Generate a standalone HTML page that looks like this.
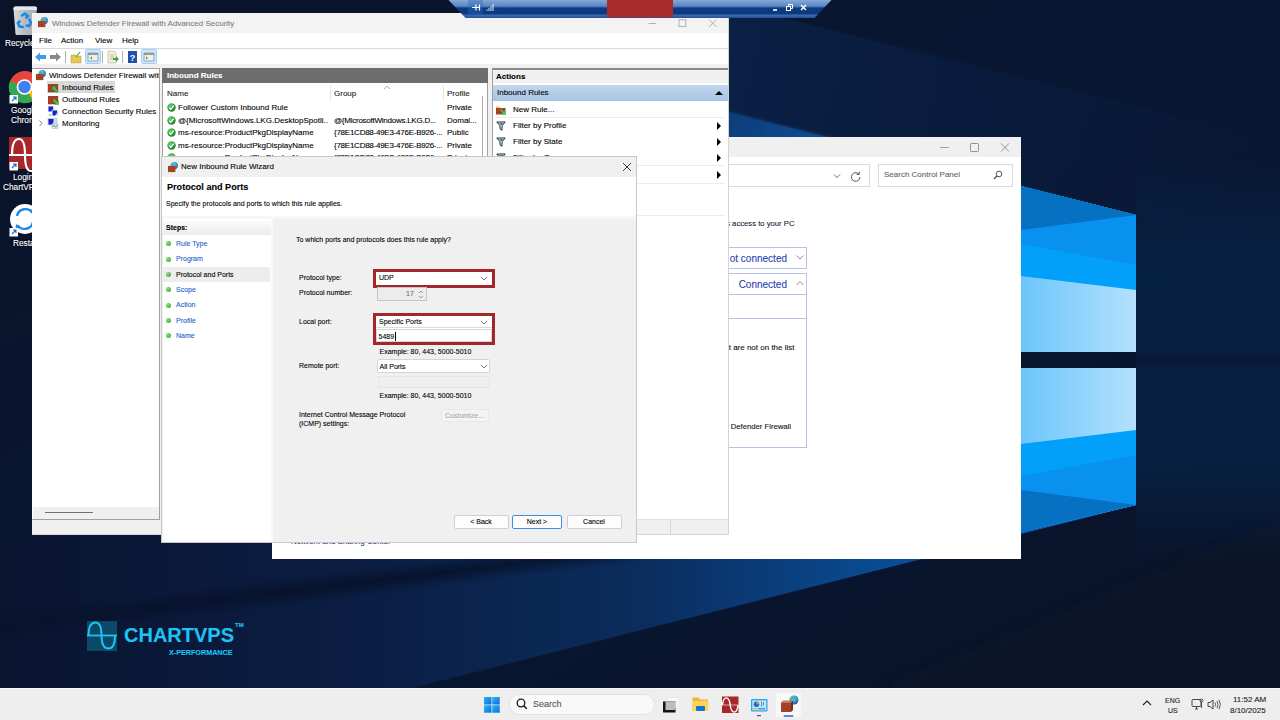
<!DOCTYPE html>
<html><head><meta charset="utf-8">
<style>
*{margin:0;padding:0;box-sizing:border-box}
html,body{width:1280px;height:720px;overflow:hidden;background:#0a1530;font-family:"Liberation Sans",sans-serif;font-size:8px;color:#000}
.a{position:absolute}
.t{position:absolute;white-space:nowrap;line-height:1;-webkit-text-stroke:0.1px currentColor}
</style></head><body>
<svg width="0" height="0" style="position:absolute">
<defs>
<pattern id="brk" width="4" height="3" patternUnits="userSpaceOnUse">
<rect width="4" height="3" fill="#b2472a"/><path d="M0 0.2h4M0 1.7h4M1 0.2v1.5M3 1.7v1.5" stroke="#7a2a18" stroke-width="0.45"/><rect x="1.4" y="0.5" width="1.2" height="0.8" fill="#d0704a" opacity="0.6"/>
</pattern>
<radialGradient id="glb" cx="0.4" cy="0.35" r="0.7"><stop offset="0" stop-color="#9ad8ff"/><stop offset="0.6" stop-color="#2a8ae0"/><stop offset="1" stop-color="#1a50b0"/></radialGradient>
<radialGradient id="chk" cx="0.35" cy="0.3" r="0.8"><stop offset="0" stop-color="#6ad070"/><stop offset="1" stop-color="#107a20"/></radialGradient>
<symbol id="fw" viewBox="0 0 11 11">
<circle cx="6.3" cy="3.6" r="3.6" fill="url(#glb)"/><path d="M3.2 2.2q1.5-1.4 3 -0.4q0.8 1 -0.5 1.6M8 2q1.6 0.6 1.6 2.4q-0.8 0.4 -1.2 -0.6" fill="#3cbf3c"/>
<rect x="0" y="3.9" width="7.4" height="6.2" fill="url(#brk)"/>
</symbol>
<symbol id="wallIn" viewBox="0 0 11 9">
<rect x="0" y="0" width="10.2" height="8.3" fill="url(#brk)"/>
<path d="M4.3 2.6l0 3.8 1.1-1.1 3.2 3.2 1.6-1.6-3.2-3.2 1.1-1.1z" fill="#3ccf4c" stroke="#1a8a2a" stroke-width="0.35"/>
</symbol>
<symbol id="wallOut" viewBox="0 0 11 9">
<rect x="0" y="0" width="10.2" height="8.3" fill="url(#brk)"/>
<path d="M10.5 8.6l0-3.8-1.1 1.1-3.2-3.2-1.6 1.6 3.2 3.2-1.1 1.1z" fill="#3ccf4c" stroke="#1a8a2a" stroke-width="0.35"/>
</symbol>
</defs></svg>
<!-- desktop background -->
<svg class="a" style="left:0;top:0" width="1280" height="720" viewBox="0 0 1280 720">
<defs>
<linearGradient id="bg" x1="0" y1="0" x2="1" y2="1">
<stop offset="0" stop-color="#0b1329"/><stop offset="0.5" stop-color="#081733"/><stop offset="1" stop-color="#0a1328"/>
</linearGradient>
<linearGradient id="lite" x1="0" y1="0" x2="1" y2="0">
<stop offset="0" stop-color="#6cc6fb"/><stop offset="1" stop-color="#b3e1fd"/>
</linearGradient>
</defs>
<rect width="1280" height="720" fill="url(#bg)"/>
<linearGradient id="beamL" gradientUnits="userSpaceOnUse" x1="1136" y1="0" x2="0" y2="0">
<stop offset="0" stop-color="#0a66c0"/><stop offset="0.2" stop-color="#0a4e98"/><stop offset="0.44" stop-color="#0b2c5c"/><stop offset="0.7" stop-color="#0b1d42"/><stop offset="1" stop-color="#0a1530"/>
</linearGradient>
<linearGradient id="beamU" gradientUnits="userSpaceOnUse" x1="1021" y1="186" x2="600" y2="80">
<stop offset="0" stop-color="#0a70d0"/><stop offset="0.5" stop-color="#0a4a90"/><stop offset="1" stop-color="#0b2a58"/>
</linearGradient>
<filter id="bl"><feGaussianBlur stdDeviation="6"/></filter>
<filter id="bl2"><feGaussianBlur stdDeviation="1.2"/></filter>
<polygon points="1136,505 0,792 0,540 1021,400" fill="url(#beamL)"/>
<polygon points="1021,186 560,68 560,300 1021,300" fill="url(#beamU)" filter="url(#bl2)"/>
<linearGradient id="stk" gradientUnits="userSpaceOnUse" x1="0" y1="0" x2="660" y2="0"><stop offset="0" stop-color="#070e22" stop-opacity="0.3"/><stop offset="0.5" stop-color="#070e22" stop-opacity="0.6"/><stop offset="1" stop-color="#070e22" stop-opacity="0.7"/></linearGradient><filter id="bl3" x="-10%" y="-50%" width="120%" height="200%"><feGaussianBlur stdDeviation="4"/></filter><linearGradient id="stkN" gradientUnits="userSpaceOnUse" x1="318.3" y1="573.6" x2="321.7" y2="601.4"><stop offset="0" stop-color="#060c1e" stop-opacity="0"/><stop offset="0.5" stop-color="#060c1e" stop-opacity="0.75"/><stop offset="1" stop-color="#060c1e" stop-opacity="0"/></linearGradient>
<linearGradient id="stkH" gradientUnits="userSpaceOnUse" x1="0" y1="0" x2="640" y2="0"><stop offset="0" stop-color="#fff" stop-opacity="0.35"/><stop offset="0.6" stop-color="#fff" stop-opacity="0.9"/><stop offset="0.95" stop-color="#fff" stop-opacity="0.8"/><stop offset="1" stop-color="#fff" stop-opacity="0"/></linearGradient>
<mask id="stkM"><rect x="0" y="400" width="700" height="320" fill="url(#stkH)"/></mask>
<polygon points="-10,612 650,535 650,562 -10,640" fill="url(#stkN)" mask="url(#stkM)"/>

<polygon points="1280,520 880,688 1280,688" fill="#0a1226" opacity="0.6" filter="url(#bl)"/>
<linearGradient id="bandU" gradientUnits="userSpaceOnUse" x1="729" y1="60" x2="1280" y2="200"><stop offset="0" stop-color="#0c2a5a" stop-opacity="0.5"/><stop offset="0.5" stop-color="#0b2450" stop-opacity="0.3"/><stop offset="1" stop-color="#0b2048" stop-opacity="0.05"/></linearGradient><polygon points="729,4.5 1280,142 1280,252 729,112" fill="url(#bandU)"/>
<linearGradient id="glowV" x1="0" y1="0" x2="0" y2="1"><stop offset="0" stop-color="#06284e" stop-opacity="0"/><stop offset="0.25" stop-color="#06284e" stop-opacity="0.6"/><stop offset="0.75" stop-color="#06284e" stop-opacity="0.6"/><stop offset="1" stop-color="#06284e" stop-opacity="0"/></linearGradient>
<rect x="1136" y="160" width="144" height="400" fill="url(#glowV)"/>
<rect x="1136" y="353" width="144" height="14" fill="#0a1936" opacity="0.8"/>
<!-- windows logo upper pane -->
<polygon points="1021,186 1136,215 1136,352 1021,352" fill="url(#lite)"/>
<polygon points="1021,186 1136,215 1136,290 1021,276" fill="#03a0fa"/>
<polygon points="1021,186 1136,215 1136,265 1021,244" fill="#0891ee"/>
<polygon points="1021,186 1136,215 1021,230" fill="#0670c2"/>
<!-- lower pane -->
<polygon points="1021,368 1136,368 1136,505 1021,532" fill="url(#lite)"/>
<polygon points="1021,444 1136,430 1136,505 1021,532" fill="#03a0fa"/>
<polygon points="1021,476 1136,455 1136,505 1021,532" fill="#0891ee"/>
<polygon points="1021,490 1136,505 1021,532" fill="#0670c2"/>
</svg>

<!-- desktop icons -->
<svg class="a" style="left:0;top:0" width="40" height="260" viewBox="0 0 40 260">
 <linearGradient id="binG" x1="0" y1="0" x2="1" y2="0"><stop offset="0" stop-color="#d8dce0"/><stop offset="0.5" stop-color="#b4bac0"/><stop offset="1" stop-color="#a8aeb4"/></linearGradient>
 <path d="M13.5 8.5q0-2 2-2h19.5q2 0 2 2l-3 25.5q-0.3 1-1.5 1h-15.5q-1.2 0-1.5-1z" fill="url(#binG)"/><path d="M13.5 8.5q0-2 2-2h19.5q2 0 2 2v1.5h-23.5z" fill="#e4e8ec"/>
 <path d="M22 15.5l3-2 3 2.5-1.6 1.5M29.5 19.5l1.5 3.5-2 3-2.3-0.5M23 27l-3.5-0.5-1.5-3.5 1.5-1.5" stroke="#1a8ae8" stroke-width="2.6" fill="none" stroke-linecap="round"/>
 <circle cx="25" cy="87" r="16" fill="#e8453c"/>
 <path d="M25 87 L39 79 A16 16 0 0 1 33 101z" fill="#fbbc05"/>
 <path d="M25 87 L33 101 A16 16 0 0 1 10 81z" fill="#34a853"/>
 <circle cx="24.5" cy="87" r="7.8" fill="#fff"/><circle cx="24.5" cy="87" r="6.2" fill="#3f7ff0"/>
 <rect x="9" y="137" width="30" height="32" fill="#a8282a"/>
 <path d="M9 155h30" stroke="#fff" stroke-width="2"/>
 <path d="M12 155c0-14 4-16 7-16s6 3 6 16 3 16 6 16 6-3 6-16" stroke="#fff" stroke-width="2.2" fill="none"/>
 <circle cx="25" cy="219" r="15" fill="#fff"/>
 <path d="M17 216a8.5 8.5 0 0 1 15.5-3" stroke="#1e88e5" stroke-width="2.3" fill="none"/><path d="M33 222a8.5 8.5 0 0 1-15.5 3" stroke="#1e88e5" stroke-width="2.3" fill="none"/>
 <path d="M29 210l5 4 0.5-5z" fill="#1e88e5"/><path d="M21 228l-5-4-0.5 5z" fill="#1e88e5"/>
 <rect x="9.5" y="95" width="8.5" height="8.5" fill="#fff"/><path d="M12 101l4-4M13 97h3v3" stroke="#1a6ad0" stroke-width="1.1" fill="none"/>
 <rect x="9.5" y="162" width="8.5" height="8.5" fill="#fff"/><path d="M12 168l4-4M13 164h3v3" stroke="#1a6ad0" stroke-width="1.1" fill="none"/>
 <rect x="9.5" y="228" width="8.5" height="8.5" fill="#fff"/><path d="M12 234l4-4M13 230h3v3" stroke="#1a6ad0" stroke-width="1.1" fill="none"/>
</svg>
<div class="t" style="left:5px;top:39px;font-size:8.3px;color:#fff;text-shadow:0 0 2px #000">Recycle Bin</div>
<div class="t" style="left:11px;top:106px;font-size:8.3px;color:#fff;text-shadow:0 0 2px #000">Google</div>
<div class="t" style="left:11px;top:116px;font-size:8.3px;color:#fff;text-shadow:0 0 2px #000">Chrome</div>
<div class="t" style="left:13px;top:173px;font-size:8.3px;color:#fff;text-shadow:0 0 2px #000">Login</div>
<div class="t" style="left:3px;top:183px;font-size:8.3px;color:#fff;text-shadow:0 0 2px #000">ChartVPS</div>
<div class="t" style="left:13px;top:239px;font-size:8.3px;color:#fff;text-shadow:0 0 2px #000">Restart</div>
<!-- chartvps logo -->
<svg class="a" style="left:87px;top:621px" width="30" height="30" viewBox="0 0 30 30">
 <rect width="30" height="30" fill="#0c4966"/>
 <path d="M0 14.5h30" stroke="#1ec3f5" stroke-width="1.8"/>
 <path d="M1.5 14.5c0-10 3.5-13 7-13s6 3 6 13 3 13 7 13 6.5-3 6.5-13" stroke="#1ec3f5" stroke-width="2" fill="none"/>
</svg>
<div class="t" style="left:124px;top:625px;font-size:20px;font-weight:bold;color:#1ec3f5">CHARTVPS</div>
<div class="t" style="left:235px;top:622px;font-size:6px;font-weight:bold;color:#1ec3f5">TM</div>
<div class="t" style="left:169px;top:649px;font-size:7.2px;font-weight:bold;color:#1ec3f5">X-PERFORMANCE</div>

<!-- Control panel window -->
<div class="a" id="cp" style="left:272px;top:137px;width:749px;height:422px;background:#fff;overflow:hidden">
 <div class="a" style="left:0;top:0;width:749px;height:20px;background:#f0f0f0"></div>
 <svg class="a" style="left:665px;top:5px" width="80" height="11"><path d="M3 5.5h9" stroke="#999" stroke-width="0.9"/><rect x="33.5" y="1.5" width="8" height="8" rx="0.8" fill="none" stroke="#888" stroke-width="0.9"/><path d="M64 1.5l8 8M72 1.5l-8 8" stroke="#888" stroke-width="0.9"/></svg>
 <div class="a" style="left:-2px;top:27px;width:600px;height:23px;border:1px solid #dadada;background:#fff"></div>
 <svg class="a" style="left:561px;top:34px" width="30" height="12"><path d="M1 3.5l3 3 3-3" stroke="#555" fill="none" stroke-width="0.9"/><path d="M27 6a4.3 4.3 0 1 1-1.3-3.1" stroke="#555" fill="none" stroke-width="1"/><path d="M26.2 0.8v2.6h-2.6" stroke="#555" fill="none" stroke-width="1"/></svg>
 <div class="a" style="left:606px;top:27px;width:135px;height:23px;border:1px solid #dadada;background:#fff"></div>
 <div class="t" style="left:612px;top:34px;font-size:8px;color:#666">Search Control Panel</div>
 <svg class="a" style="left:721px;top:33px" width="10" height="10"><circle cx="6" cy="4" r="2.8" stroke="#444" fill="none" stroke-width="0.9"/><path d="M4 6l-3 3" stroke="#444" stroke-width="1.1"/></svg>
 <div class="t" style="right:226.5px;top:83px;font-size:7.7px;color:#1a1a3a">Allowing apps and features access to your PC</div>
 <div class="a" style="left:-2px;top:110px;width:537px;height:22px;border:1px solid #bac0ea;background:#fff"></div>
 <div class="t" style="right:234px;top:116.5px;font-size:10px;color:#2a3fb0">ot connected</div>
 <svg class="a" style="left:524px;top:118px" width="8" height="5"><path d="M0.5 0.5l3.5 3.5 3.5-3.5" stroke="#777" fill="none" stroke-width="0.8"/></svg>
 <div class="a" style="left:-2px;top:136px;width:537px;height:22px;border:1px solid #bac0ea;background:#fff"></div>
 <div class="t" style="right:234px;top:142.5px;font-size:10px;color:#2a3fb0">Connected</div>
 <svg class="a" style="left:524px;top:144px" width="8" height="5"><path d="M0.5 4l3.5-3.5 3.5 3.5" stroke="#777" fill="none" stroke-width="0.8"/></svg>
 <div class="a" style="left:-2px;top:157px;width:537px;height:25px;border:1px solid #bac0ea;border-top:none"></div>
 <div class="a" style="left:-2px;top:181px;width:537px;height:130px;border:1px solid #bac0ea;border-top:none"></div>
 <div class="t" style="right:226.5px;top:206.5px;font-size:8px;color:#111">Block all incoming connections, including those that are not on the list</div>
 <div class="t" style="right:230px;top:286px;font-size:7.7px;color:#111">Notification state: Notify me when Windows Defender Firewall</div>
 <div class="t" style="left:19px;top:401px;font-size:7.9px;color:#2a3a7a">Network and Sharing Center</div>
</div>

<!-- MMC window -->
<div class="a" id="mmc" style="left:32px;top:13px;width:697px;height:522px;background:#f0f0f0;overflow:hidden">
 <!-- title bar -->
 <div class="a" style="left:0;top:0;width:697px;height:20px;background:#f3f3f3"></div>
 <svg class="a" style="left:6px;top:4px" width="11" height="11"><use href="#fw"/></svg>
 <div class="t" style="left:20px;top:6.5px;font-size:8px;color:#808080">Windows Defender Firewall with Advanced Security</div>
 <svg class="a" style="left:611px;top:5px" width="80" height="12"><path d="M5.5 5.5h7.5" stroke="#a0a0a0" stroke-width="0.8"/><rect x="36" y="1.8" width="6.8" height="6.8" fill="none" stroke="#a0a0a0" stroke-width="0.8"/><path d="M66 1.5l7.5 7.5M73.5 1.5l-7.5 7.5" stroke="#a0a0a0" stroke-width="0.8"/></svg>
 <!-- menu -->
 <div class="a" style="left:0;top:20px;width:697px;height:15px;background:#fff"></div>
 <div class="t" style="left:7px;top:24px;font-size:8px;color:#000">File</div>
 <div class="t" style="left:29px;top:24px;font-size:8px;color:#000">Action</div>
 <div class="t" style="left:63px;top:24px;font-size:8px;color:#000">View</div>
 <div class="t" style="left:90px;top:24px;font-size:8px;color:#000">Help</div>
 <div class="a" style="left:0;top:35px;width:697px;height:1px;background:#d9d9d9"></div>
 <!-- toolbar -->
 <div class="a" style="left:0;top:36px;width:697px;height:14.5px;background:#fff"></div>
 <svg class="a" style="left:0;top:35px" width="130" height="18" viewBox="0 0 130 18">
  <path d="M3 9l5-4.5v2.5h6v4h-6v2.5z" fill="#3d9be9"/>
  <path d="M29 9l-5-4.5v2.5h-6v4h6v2.5z" fill="#8a8a8a"/>
  <rect x="33" y="3" width="1" height="12" fill="#b0b0b0"/>
  <path d="M39 7h4l1 1h5v7h-10z" fill="#e8c65a" stroke="#b8962a" stroke-width="0.5"/><path d="M44 9l4-5" stroke="#3aaa3a" stroke-width="1.2"/>
  <rect x="53.5" y="1.5" width="15" height="14" rx="1" fill="#cce8ff" stroke="#99d1ff"/>
  <rect x="56" y="5" width="10" height="8" fill="#eee" stroke="#777" stroke-width="0.6"/><rect x="56" y="5" width="10" height="2" fill="#999"/><path d="M58 10l2-1.5v3z" fill="#2a2"/>
  <rect x="70" y="3" width="1" height="12" fill="#b0b0b0"/>
  <path d="M76 3h6l2 2v10h-8z" fill="#f4f0d8" stroke="#999" stroke-width="0.5"/><path d="M78 7h4M78 9h4M78 11h3" stroke="#888" stroke-width="0.5"/><path d="M81 10h3v-2l3 3-3 3v-2h-3z" fill="#3aaa3a"/>
  <rect x="90" y="3" width="1" height="12" fill="#b0b0b0"/>
  <rect x="96" y="3" width="9" height="12" fill="#1f4fb0"/><text x="100.5" y="13" font-size="9" font-family="Liberation Sans" font-weight="bold" fill="#fff" text-anchor="middle">?</text>
  <rect x="109.5" y="1.5" width="15" height="14" rx="1" fill="#cce8ff" stroke="#99d1ff"/>
  <rect x="112" y="5" width="10" height="8" fill="#eee" stroke="#777" stroke-width="0.6"/><rect x="112" y="5" width="10" height="2" fill="#999"/><path d="M114 8.5l2 1.5-2 1.5z" fill="#2a2"/>
 </svg>
 <!-- left pane -->
 <div class="a" style="left:0;top:55px;width:128px;height:452px;background:#fff;border:1px solid #a0a0a0;border-left:none"></div>
 <div class="a" style="left:1px;top:494px;width:126px;height:12px;background:#f0f0f0"></div>
 <div class="a" style="left:13px;top:499px;width:48px;height:1px;background:#707070"></div>
 <svg class="a" style="left:3.5px;top:56.5px" width="11" height="11"><use href="#fw"/></svg>
 <div class="t" style="left:17px;top:58.5px;font-size:8px;color:#000;width:110px;overflow:hidden">Windows Defender Firewall with Advanced Security</div>
 <div class="a" style="left:15px;top:68px;width:68px;height:12px;background:#d9d9d9"></div>
 <svg class="a" style="left:16px;top:70.5px" width="11" height="9"><use href="#wallIn"/></svg>
 <div class="t" style="left:30px;top:70.5px;font-size:8px;color:#000">Inbound Rules</div>
 <svg class="a" style="left:16px;top:82.5px" width="11" height="9"><use href="#wallOut"/></svg>
 <div class="t" style="left:30px;top:83px;font-size:8px;color:#000">Outbound Rules</div>
 <svg class="a" style="left:16px;top:92.5px" width="12" height="11" viewBox="0 0 12 11"><rect x="0.5" y="0.5" width="6" height="5" fill="#c8d8f4"/><path d="M0.5 0.5h4.5v2.5l-2 2.5h-2.5z" fill="#1424c8"/><rect x="4.5" y="4.5" width="6" height="5" fill="#c8d8f4"/><path d="M4.5 4.5h4.5v2.5l-2 2.5h-2.5z" fill="#1424c8"/><path d="M0.5 9.5q1.5-2 3 0z" fill="#18b818"/></svg>
 <div class="t" style="left:30px;top:95px;font-size:8px;color:#000">Connection Security Rules</div>
 <svg class="a" style="left:7px;top:104.5px" width="22" height="11" viewBox="0 0 22 11"><path d="M0.5 2.5l2.5 2.8-2.5 2.8" stroke="#666" fill="none" stroke-width="0.8"/><rect x="9" y="0.5" width="9" height="6.5" fill="#d0dcf0" stroke="#999" stroke-width="0.4"/><path d="M9.5 1h5v3l-1.5 2.5h-3.5z" fill="#1424c8"/><rect x="13" y="6" width="6" height="4.5" fill="#dde6f6" stroke="#8aa0d0" stroke-width="0.4"/><path d="M13.5 8.5l1.5-1 1.5 1.5 2-1.5" stroke="#20a020" fill="none" stroke-width="0.9"/></svg>
 <div class="t" style="left:30px;top:107px;font-size:8px;color:#000">Monitoring</div>
 <!-- middle pane -->
 <div class="a" style="left:130px;top:55px;width:326px;height:452px;background:#fff;border:1px solid #a0a0a0"></div>
 <div class="a" style="left:130px;top:55px;width:326px;height:15px;background:#6d6d6d"></div>
 <div class="t" style="left:135px;top:59px;font-size:8px;color:#fff;font-weight:bold">Inbound Rules</div>
 <div class="a" style="left:298px;top:72px;width:1px;height:16px;background:#e5e5e5"></div>
 <div class="a" style="left:411px;top:72px;width:1px;height:16px;background:#e5e5e5"></div>
 <div class="t" style="left:135px;top:77px;font-size:8px;color:#222">Name</div>
 <div class="t" style="left:302px;top:77px;font-size:8px;color:#222">Group</div>
 <div class="t" style="left:415px;top:77px;font-size:8px;color:#222">Profile</div>
 <svg class="a" style="left:351px;top:72px" width="8" height="5"><path d="M1 4l3-3 3 3" stroke="#999" fill="none" stroke-width="0.8"/></svg>
 <div class="a" style="left:450px;top:83px;width:1px;height:420px;background:#aaa"></div>
<svg class="a" style="left:135px;top:89.9px" width="9" height="9" viewBox="0 0 9 9"><circle cx="4.5" cy="4.5" r="4.2" fill="url(#chk)"/><path d="M2.3 4.6l1.5 1.7 2.9-3.6" stroke="#fff" stroke-width="1.3" fill="none"/></svg><div class="t" style="left:146px;top:90.9px;font-size:8px;color:#000;width:150px;overflow:hidden">Follower Custom Inbound Rule</div><div class="t" style="left:302px;top:90.9px;font-size:8px;color:#000;letter-spacing:-0.25px"></div><div class="t" style="left:415px;top:90.9px;font-size:8px;color:#000">Private</div><svg class="a" style="left:135px;top:102.5px" width="9" height="9" viewBox="0 0 9 9"><circle cx="4.5" cy="4.5" r="4.2" fill="url(#chk)"/><path d="M2.3 4.6l1.5 1.7 2.9-3.6" stroke="#fff" stroke-width="1.3" fill="none"/></svg><div class="t" style="left:146px;top:103.5px;font-size:8px;color:#000;width:150px;overflow:hidden">@{MicrosoftWindows.LKG.DesktopSpotli...</div><div class="t" style="left:302px;top:103.5px;font-size:8px;color:#000;letter-spacing:-0.25px">@{MicrosoftWindows.LKG.D...</div><div class="t" style="left:415px;top:103.5px;font-size:8px;color:#000">Domai...</div><svg class="a" style="left:135px;top:115.1px" width="9" height="9" viewBox="0 0 9 9"><circle cx="4.5" cy="4.5" r="4.2" fill="url(#chk)"/><path d="M2.3 4.6l1.5 1.7 2.9-3.6" stroke="#fff" stroke-width="1.3" fill="none"/></svg><div class="t" style="left:146px;top:116.1px;font-size:8px;color:#000;width:150px;overflow:hidden">ms-resource:ProductPkgDisplayName</div><div class="t" style="left:302px;top:116.1px;font-size:8px;color:#000;letter-spacing:-0.25px">{78E1CD88-49E3-476E-B926-...</div><div class="t" style="left:415px;top:116.1px;font-size:8px;color:#000">Public</div><svg class="a" style="left:135px;top:127.7px" width="9" height="9" viewBox="0 0 9 9"><circle cx="4.5" cy="4.5" r="4.2" fill="url(#chk)"/><path d="M2.3 4.6l1.5 1.7 2.9-3.6" stroke="#fff" stroke-width="1.3" fill="none"/></svg><div class="t" style="left:146px;top:128.7px;font-size:8px;color:#000;width:150px;overflow:hidden">ms-resource:ProductPkgDisplayName</div><div class="t" style="left:302px;top:128.7px;font-size:8px;color:#000;letter-spacing:-0.25px">{78E1CD88-49E3-476E-B926-...</div><div class="t" style="left:415px;top:128.7px;font-size:8px;color:#000">Private</div><svg class="a" style="left:135px;top:140.3px" width="9" height="9" viewBox="0 0 9 9"><circle cx="4.5" cy="4.5" r="4.2" fill="url(#chk)"/><path d="M2.3 4.6l1.5 1.7 2.9-3.6" stroke="#fff" stroke-width="1.3" fill="none"/></svg><div class="t" style="left:146px;top:141.3px;font-size:8px;color:#000;width:150px;overflow:hidden">ms-resource:ProductPkgDisplayName</div><div class="t" style="left:302px;top:141.3px;font-size:8px;color:#000;letter-spacing:-0.25px">{78E1CD88-49E3-476E-B926-...</div><div class="t" style="left:415px;top:141.3px;font-size:8px;color:#000">Private</div>
 <!-- actions pane -->
 <div class="a" style="left:460px;top:55px;width:237px;height:452px;background:#fff;border:1px solid #a0a0a0;border-top:2px solid #8a8a8a;border-right:none;border-bottom:1px solid #e2e2e2"></div>
 <div class="a" style="left:461px;top:57px;width:236px;height:13px;background:#f0f0f0"></div>
 <div class="t" style="left:464px;top:60px;font-size:8px;font-weight:bold;color:#000">Actions</div><div class="a" style="left:463px;top:103.5px;width:230px;height:1px;background:#ececec"></div><div class="a" style="left:463px;top:152px;width:230px;height:1px;background:#ececec"></div><div class="a" style="left:463px;top:169.5px;width:230px;height:1px;background:#ececec"></div><div class="a" style="left:463px;top:201.5px;width:230px;height:1px;background:#ececec"></div>
 <div class="a" style="left:461px;top:71.5px;width:236px;height:16px;background:linear-gradient(#c2d6ee,#a7c2e2)"></div>
 <div class="t" style="left:465px;top:76px;font-size:8px;color:#000">Inbound Rules</div>
 <svg class="a" style="left:683px;top:77px" width="8" height="6"><path d="M0 5l4-4 4 4z" fill="#000"/></svg>
<svg class="a" style="left:464px;top:91.5px" width="11" height="10" viewBox="0 0 11 10"><rect x="0" y="1.5" width="3.5" height="2.5" fill="#f0c040"/><rect x="0" y="3" width="9.5" height="6.5" fill="url(#brk)"/><path d="M4.5 4.5l4.5 4.5M9 5.5v3.5h-3.5" stroke="#3ccf4c" stroke-width="1.6" fill="none"/></svg><div class="t" style="left:481px;top:92.5px;font-size:8px;color:#000">New Rule...</div><svg class="a" style="left:464px;top:107.8px" width="10" height="10" viewBox="0 0 10 10"><path d="M0.8 1h8.4l-3.2 3.8v4.4l-2-1.4v-3z" fill="none" stroke="#1a2030" stroke-width="1"/><path d="M2.5 2h5l-2.2 2.5z" fill="#2a8a8a"/></svg><div class="t" style="left:481px;top:108.8px;font-size:8px;color:#000">Filter by Profile</div><svg class="a" style="left:685px;top:108.8px" width="5" height="8"><path d="M0 0l4 4-4 4z" fill="#000"/></svg><svg class="a" style="left:464px;top:124.1px" width="10" height="10" viewBox="0 0 10 10"><path d="M0.8 1h8.4l-3.2 3.8v4.4l-2-1.4v-3z" fill="none" stroke="#1a2030" stroke-width="1"/><path d="M2.5 2h5l-2.2 2.5z" fill="#2a8a8a"/></svg><div class="t" style="left:481px;top:125.1px;font-size:8px;color:#000">Filter by State</div><svg class="a" style="left:685px;top:125.1px" width="5" height="8"><path d="M0 0l4 4-4 4z" fill="#000"/></svg><svg class="a" style="left:464px;top:140.4px" width="10" height="10" viewBox="0 0 10 10"><path d="M0.8 1h8.4l-3.2 3.8v4.4l-2-1.4v-3z" fill="none" stroke="#1a2030" stroke-width="1"/><path d="M2.5 2h5l-2.2 2.5z" fill="#2a8a8a"/></svg><div class="t" style="left:481px;top:141.4px;font-size:8px;color:#000">Filter by Group</div><svg class="a" style="left:685px;top:141.4px" width="5" height="8"><path d="M0 0l4 4-4 4z" fill="#000"/></svg><svg class="a" style="left:464px;top:156.7px" width="10" height="10" viewBox="0 0 10 10"><path d="M0.8 1h8.4l-3.2 3.8v4.4l-2-1.4v-3z" fill="none" stroke="#1a2030" stroke-width="1"/><path d="M2.5 2h5l-2.2 2.5z" fill="#2a8a8a"/></svg><div class="t" style="left:481px;top:157.7px;font-size:8px;color:#000">View</div><svg class="a" style="left:685px;top:157.7px" width="5" height="8"><path d="M0 0l4 4-4 4z" fill="#000"/></svg>
 <!-- status bar -->
 <div class="a" style="left:0;top:507px;width:697px;height:15px;background:#f0f0f0;border-bottom:1px solid #d6d6d6"></div><div class="a" style="left:696px;top:0;width:1px;height:522px;background:#d4d4d4"></div>
 <div class="a" style="left:638px;top:508px;width:1px;height:13px;background:#d6d6d6"></div>
</div>

<!-- Wizard -->
<div class="a" id="wiz" style="left:161px;top:156px;width:476px;height:387px;background:#f0f0f0;border:1px solid #c8c8c8;overflow:hidden">
 <div class="a" style="left:0;top:0;width:476px;height:20px;background:#f0f0f0"></div>
 <svg class="a" style="left:6px;top:5px" width="11" height="11"><use href="#fw"/></svg>
 <div class="t" style="left:19px;top:6px;font-size:8px;color:#000">New Inbound Rule Wizard</div>
 <svg class="a" style="left:460px;top:5px" width="10" height="10"><path d="M1 1l8 8M9 1l-8 8" stroke="#222" stroke-width="0.9"/></svg>
 <div class="a" style="left:0;top:20px;width:476px;height:39px;background:#fff"></div>
 <div class="t" style="left:5px;top:26px;font-size:9.1px;font-weight:bold;color:#000">Protocol and Ports</div>
 <div class="t" style="left:4px;top:43px;font-size:7px;color:#000">Specify the protocols and ports to which this rule applies.</div>
 <div class="a" style="left:0;top:59px;width:476px;height:3px;background:#f7f7f7"></div>
 <!-- steps panel -->
 <div class="a" style="left:1px;top:62px;width:108px;height:325px;background:#fff"></div><div class="a" style="left:109px;top:60px;width:2px;height:327px;background:#f8f8f8"></div>
 <div class="a" style="left:1px;top:63.5px;width:108px;height:14px;background:linear-gradient(#fbfbfb,#ececec)"></div>
 <div class="t" style="left:4px;top:67px;font-size:7px;font-weight:bold;color:#000">Steps:</div>
<div class="a" style="left:3.5px;top:84.3px;width:5px;height:5px;border-radius:50%;background:radial-gradient(circle at 35% 35%,#8fe07a,#2a9a2a)"></div><div class="t" style="left:14px;top:83.0px;font-size:7px;color:#1b62cc">Rule Type</div><div class="a" style="left:3.5px;top:99.6px;width:5px;height:5px;border-radius:50%;background:radial-gradient(circle at 35% 35%,#8fe07a,#2a9a2a)"></div><div class="t" style="left:14px;top:98.3px;font-size:7px;color:#1b62cc">Program</div><div class="a" style="left:1px;top:110.0px;width:107px;height:15px;background:#ededed"></div><div class="a" style="left:3.5px;top:115.0px;width:5px;height:5px;border-radius:50%;background:radial-gradient(circle at 35% 35%,#8fe07a,#2a9a2a)"></div><div class="t" style="left:14px;top:113.7px;font-size:7px;color:#000">Protocol and Ports</div><div class="a" style="left:3.5px;top:130.3px;width:5px;height:5px;border-radius:50%;background:radial-gradient(circle at 35% 35%,#8fe07a,#2a9a2a)"></div><div class="t" style="left:14px;top:129.0px;font-size:7px;color:#1b62cc">Scope</div><div class="a" style="left:3.5px;top:145.6px;width:5px;height:5px;border-radius:50%;background:radial-gradient(circle at 35% 35%,#8fe07a,#2a9a2a)"></div><div class="t" style="left:14px;top:144.3px;font-size:7px;color:#1b62cc">Action</div><div class="a" style="left:3.5px;top:160.9px;width:5px;height:5px;border-radius:50%;background:radial-gradient(circle at 35% 35%,#8fe07a,#2a9a2a)"></div><div class="t" style="left:14px;top:159.6px;font-size:7px;color:#1b62cc">Profile</div><div class="a" style="left:3.5px;top:176.3px;width:5px;height:5px;border-radius:50%;background:radial-gradient(circle at 35% 35%,#8fe07a,#2a9a2a)"></div><div class="t" style="left:14px;top:175.0px;font-size:7px;color:#1b62cc">Name</div>
 <!-- content -->
 <div class="t" style="left:134px;top:79px;font-size:7px;color:#000">To which ports and protocols does this rule apply?</div>
 <div class="t" style="left:137px;top:117px;font-size:7px;color:#000">Protocol type:</div>
 <div class="t" style="left:137px;top:132px;font-size:7px;color:#000">Protocol number:</div>
 <div class="t" style="left:137px;top:161px;font-size:7px;color:#000">Local port:</div>
 <div class="t" style="left:137px;top:205px;font-size:7px;color:#000">Remote port:</div>
 <div class="t" style="left:137px;top:254px;font-size:7px;color:#000;line-height:8.5px">Internet Control Message Protocol<br>(ICMP) settings:</div>
 <!-- red box 1 -->
 <div class="a" style="left:211px;top:112px;width:122px;height:19px;border:3px solid #a3262c;background:#fff"></div>
 <div class="t" style="left:217px;top:116.5px;font-size:7px;color:#000">UDP</div>
 <svg class="a" style="left:318px;top:118.5px" width="8" height="5"><path d="M1 1l3 3 3-3" stroke="#555" fill="none" stroke-width="0.8"/></svg>
 <!-- spin -->
 <div class="a" style="left:215px;top:130px;width:50px;height:14px;border:1px solid #c6c6c6;background:#ececec"></div>
 <div class="t" style="left:244px;top:133px;font-size:7px;color:#6d6d6d">17</div>
 <svg class="a" style="left:255px;top:131.5px" width="8" height="11"><path d="M2 4l2-2 2 2M2 7l2 2 2-2" stroke="#777" fill="none" stroke-width="0.7"/></svg>
 <!-- red box 2 -->
 <div class="a" style="left:211px;top:156px;width:122px;height:32px;border:3px solid #a3262c;background:#fff"></div>
 <div class="a" style="left:214px;top:159px;width:116px;height:12px;background:#fff;border-bottom:1px solid #dcdcdc"></div><div class="a" style="left:214px;top:172px;width:116px;height:13px;background:#fff;border:1px solid #d6d6d6"></div>
 <div class="t" style="left:217px;top:161px;font-size:7px;color:#000">Specific Ports</div>
 <svg class="a" style="left:318px;top:162.5px" width="8" height="5"><path d="M1 1l3 3 3-3" stroke="#555" fill="none" stroke-width="0.8"/></svg>
 <div class="t" style="left:216.5px;top:176px;font-size:7px;color:#000">5489</div>
 <div class="a" style="left:233px;top:174.5px;width:1px;height:9px;background:#000"></div>
 <div class="t" style="left:217.5px;top:190.5px;font-size:7px;color:#000">Example: 80, 443, 5000-5010</div>
 <!-- remote -->
 <div class="a" style="left:215px;top:201.5px;width:113px;height:14px;border:1px solid #d4d4d4;border-radius:2px;background:#fff"></div>
 <div class="t" style="left:217.5px;top:205.5px;font-size:7px;color:#000">All Ports</div>
 <svg class="a" style="left:318px;top:206.5px" width="8" height="5"><path d="M1 1l3 3 3-3" stroke="#555" fill="none" stroke-width="0.8"/></svg>
 <div class="a" style="left:216px;top:218.5px;width:112px;height:12px;border:1px solid #e6e6e6;background:#efefef"></div>
 <div class="t" style="left:217.5px;top:234.5px;font-size:7px;color:#000">Example: 80, 443, 5000-5010</div>
 <div class="a" style="left:279px;top:252px;width:48px;height:13px;border:1px solid #e8e8e8;border-radius:2px;background:#f4f4f4"></div>
 <div class="t" style="left:283px;top:255px;font-size:7px;color:#a8a8a8">Customize...</div>
 <!-- buttons -->
 <div class="a" style="left:292px;top:357.5px;width:55px;height:14.5px;border:1px solid #cfcfcf;border-radius:2px;background:#fdfdfd"></div>
 <div class="t" style="left:291.5px;top:361px;width:55px;text-align:center;font-size:7px;color:#000">&lt; Back</div>
 <div class="a" style="left:350px;top:357.5px;width:50px;height:14.5px;border:1px solid #3c8ee0;border-radius:2px;background:#fdfdfd"></div>
 <div class="t" style="left:350px;top:361px;width:50px;text-align:center;font-size:7px;color:#000">Next &gt;</div>
 <div class="a" style="left:404.5px;top:357.5px;width:55px;height:14.5px;border:1px solid #cfcfcf;border-radius:2px;background:#fdfdfd"></div>
 <div class="t" style="left:404.5px;top:361px;width:55px;text-align:center;font-size:7px;color:#000">Cancel</div>
</div>

<!-- taskbar -->
<div class="a" id="tb" style="left:0;top:688px;width:1280px;height:32px;background:#eeeeee;border-top:1px solid #f6f6f6">
 <svg class="a" style="left:484px;top:8px" width="16" height="16" viewBox="0 0 16 16"><defs><linearGradient id="wl" x1="0" y1="0" x2="1" y2="1"><stop offset="0" stop-color="#2cb8f8"/><stop offset="1" stop-color="#0a6ad8"/></linearGradient></defs><rect x="0" y="0" width="7.5" height="7.5" fill="url(#wl)"/><rect x="8.2" y="0" width="7.5" height="7.5" fill="url(#wl)"/><rect x="0" y="8.2" width="7.5" height="7.5" fill="url(#wl)"/><rect x="8.2" y="8.2" width="7.5" height="7.5" fill="url(#wl)"/></svg>
 <div class="a" style="left:509px;top:5px;width:146px;height:21px;border-radius:11px;background:#f9f9f9;border:1px solid #e2e2e2"></div>
 <svg class="a" style="left:516px;top:9px" width="12" height="13"><circle cx="5" cy="5" r="3.8" stroke="#1a1a1a" stroke-width="1.3" fill="none"/><path d="M7.8 7.8l3 3" stroke="#1a1a1a" stroke-width="1.5"/></svg>
 <div class="t" style="left:533px;top:11px;font-size:9px;color:#555">Search</div>
 <svg class="a" style="left:660px;top:3.5px" width="150" height="26" viewBox="0 0 150 26">
  <rect x="7.5" y="4.5" width="12" height="10.5" fill="#f8f8f8" stroke="#e4e4e4" stroke-width="0.6"/><rect x="3" y="8.5" width="12.5" height="11" fill="#141414"/><rect x="5.5" y="8.5" width="10" height="8.5" fill="#bdbdbd"/><rect x="15.5" y="8.5" width="4" height="6.5" fill="#f4f4f4"/>
  <path d="M32.5 4.5h6l1.5 2h8v11h-15.5z" fill="#f0b830"/><rect x="32.5" y="8" width="16" height="10" fill="#fbd55a"/><rect x="36" y="13" width="9" height="5" rx="1" fill="#1a70d0"/>
  <rect x="62" y="3.5" width="16.5" height="16.5" fill="#a8282a"/><path d="M62 12h16.5" stroke="#e8c8c8" stroke-width="0.8"/><path d="M62.5 12C63.5 2.5 69 2.5 70.2 12S77 21.5 78 12" stroke="#fff" stroke-width="1.4" fill="none"/>
  <rect x="91" y="6" width="16.5" height="12.5" rx="1.2" fill="#2aa4ec"/><rect x="92.3" y="7.3" width="14" height="10" fill="#bfe6fb"/><circle cx="96.5" cy="11.3" r="2.8" fill="#1a70d0"/><path d="M96.5 11.3v-2.8a2.8 2.8 0 0 1 2.8 2.8z" fill="#f09020"/><path d="M101.5 8.5v5M103.5 9v3.5" stroke="#1a70c0" stroke-width="0.7"/><path d="M93 15.8h4" stroke="#f09020" stroke-width="1"/><path d="M98 15.8h7" stroke="#1a70c0" stroke-width="1"/>
  <rect x="97" y="22" width="4" height="1.2" fill="#555"/>
  <rect x="116" y="-0.5" width="25" height="25" rx="2" fill="#f8f8f8"/>
  <circle cx="134" cy="7" r="4.5" fill="url(#glb)"/><path d="M130.5 5.5q2-2.2 4.5-0.8q0.5 1.5-1 2M136 4.5q2 1 1.8 3.2q-1 0.3-1.4-1" fill="#3cbf3c"/><path d="M121 9.5l2-2h10l-2 2z" fill="#c87a5a"/><rect x="121" y="9.5" width="10" height="9.5" fill="url(#brk)"/><path d="M131 9.5l2-2v9.5l-2 2z" fill="#7a2a18"/>
  <rect x="123.5" y="22.2" width="10" height="1.5" rx="0.7" fill="#1a6ad8"/>
 </svg>
 <svg class="a" style="left:1142px;top:11px" width="10" height="6"><path d="M1 5l4-4 4 4" stroke="#222" stroke-width="1.1" fill="none"/></svg>
 <div class="t" style="left:1165px;top:7.5px;font-size:7px;color:#222">ENG</div>
 <div class="t" style="left:1168px;top:17.5px;font-size:7px;color:#222">US</div>
 <svg class="a" style="left:1191px;top:9px" width="32" height="13"><rect x="1" y="1.5" width="9" height="7" rx="1" stroke="#333" fill="none" stroke-width="0.9"/><path d="M4 11h3M5.5 8.5v2.5" stroke="#333" stroke-width="0.9"/><circle cx="10.5" cy="2.5" r="1.5" stroke="#333" fill="none" stroke-width="0.8"/><path d="M10.5 4v6" stroke="#333" stroke-width="0.8"/><path d="M17 4.5h2l3-2.5v9l-3-2.5h-2z" stroke="#333" fill="none" stroke-width="0.9"/><path d="M24 4.5q1 2 0 4M26 3q2 3.5 0 7M28 1.8q2.8 4.7 0 9.4" stroke="#333" fill="none" stroke-width="0.8"/></svg>
 <div class="t" style="left:1233px;top:6.5px;font-size:8px;color:#222">11:52 AM</div>
 <div class="t" style="left:1230px;top:17.5px;font-size:8px;color:#222">8/10/2025</div>
</div>

<!-- RDP bar -->
<svg class="a" id="rdp" style="left:440px;top:0" width="400" height="19" viewBox="0 0 400 19">
 <defs><linearGradient id="rg" x1="0" y1="0" x2="0" y2="1"><stop offset="0" stop-color="#86a8d6"/><stop offset="0.35" stop-color="#5a84c0"/><stop offset="0.45" stop-color="#0c3b80"/><stop offset="0.75" stop-color="#0b3a80"/><stop offset="0.85" stop-color="#3c68b0"/><stop offset="1" stop-color="#254f98"/></linearGradient></defs>
 <path d="M8.5 0h383l-17 18h-349z" fill="url(#rg)"/>
 <rect x="167" y="0" width="66" height="17.5" fill="#a52b2d"/>
 <rect x="28" y="0" width="15" height="14" fill="#2a6ac0" opacity="0.4"/>
 <path d="M36 4.5v6M39.5 4.5v6M32 7.5h7.5" stroke="#fff" stroke-width="1.2"/>
 <path d="M47 11v-1.5M49 11v-3M51 11v-4.5M53 11v-7" stroke="#f4f8ff" stroke-width="0.9"/>
 <path d="M333 10h4" stroke="#fff" stroke-width="1.6"/>
 <rect x="346.5" y="6.5" width="4" height="4" fill="none" stroke="#fff" stroke-width="1"/><path d="M348.5 6.5v-2h4v4h-2" fill="none" stroke="#fff" stroke-width="1"/>
 <path d="M361 5l5 5M366 5l-5 5" stroke="#fff" stroke-width="1.5"/>
</svg>
</body></html>
